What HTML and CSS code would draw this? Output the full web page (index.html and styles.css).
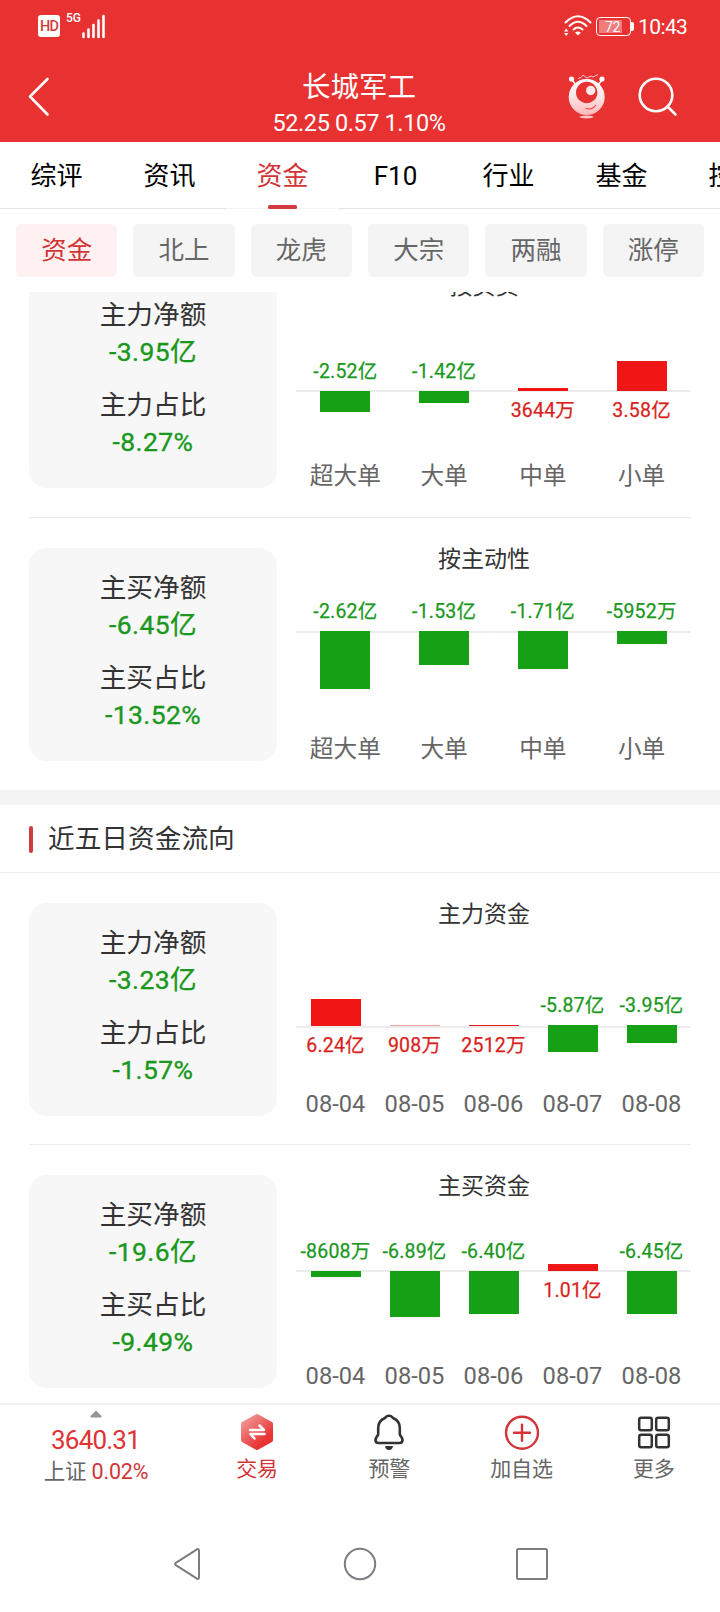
FILE: index.html
```html
<!DOCTYPE html>
<html lang="zh-CN">
<head>
<meta charset="utf-8">
<title>长城军工</title>
<link rel="stylesheet" href="styles.css">
</head>
<body>
<div class="screen">
  <header class="header">
    <div class="status">
      <span class="hd">HD</span>
      <span class="net">5G</span>
      <svg class="signal" width="24" height="25" viewBox="0 0 24 25" stroke="#fff" stroke-width="2.6" stroke-linecap="round"><path d="M1.5 19.5V23M6.5 15.5V23M11.500 11V23M16.500 6.500V23M21.500 2V23"/></svg>
      <span class="grow"></span>
      <svg class="wifi" width="28" height="22" viewBox="0 0 28 22" fill="none" stroke="#fff" stroke-width="2" stroke-linecap="round"><path d="M1.500 7.500Q14-5 26.500 7.500M5.500 11Q14 2.500 22.500 11M9.500 14.500Q14 10.500 18.500 14.500"/><path d="M11 17.500Q14 15.500 17 17.500L14 20.500Z" fill="#fff" stroke="none"/><path d="M0 16.500L2.200 13.500L4.400 16.500ZM0 18L2.200 21L4.400 18Z" fill="#fff" stroke="none"/></svg>
      <span class="battery"><span class="charge">72</span></span><span class="pole"></span>
      <span class="clock">10:43</span>
    </div>
    <div class="titlebar">
      <svg class="back" width="22" height="40" viewBox="0 0 22 40" fill="none" stroke="#fff" stroke-width="2.600" stroke-linecap="round" stroke-linejoin="round"><path d="M19.500 2L2 19.500L19.500 37.500"/></svg>
      <div class="heading">
        <h1 class="name">长城军工</h1>
        <p class="quote">52.25 0.57 1.10%</p>
      </div>
      <svg class="robot" width="38" height="47" viewBox="0 0 38 47" fill="none">
        <defs><linearGradient id="skin" x1="0" y1="0" x2="0" y2="1"><stop offset="0" stop-color="#fff"/><stop offset=".5" stop-color="#ffe4e4"/><stop offset="1" stop-color="#ffb9b9"/></linearGradient></defs>
        <path d="M10 5.500L13 4.500L15 2L19 5L23 3L25 4L30 1.500" stroke="#ffc9c9" stroke-width="1"/>
        <path d="M4 7L8 12M34 7L30 12" stroke="#fff" stroke-width="1.400"/>
        <circle cx="3.500" cy="6" r="2.600" fill="#fff"/><circle cx="34" cy="6" r="2.600" fill="#fff"/>
        <circle cx="18.700" cy="24" r="18" fill="url(#skin)"/>
        <circle cx="18.700" cy="19.500" r="10.700" fill="#e83131"/>
        <circle cx="22.700" cy="17.500" r="4.700" fill="#ffe8e8"/>
        <path d="M18 35.500Q24.500 37 27.500 32.500" stroke="#e94444" stroke-width="1.200" stroke-linecap="round"/>
        <ellipse cx="18.500" cy="44" rx="7" ry="1.500" fill="#ffc4c4"/>
      </svg>
      <svg class="search" width="40" height="40" viewBox="0 0 40 40" fill="none" stroke="#fff" stroke-width="2.600" stroke-linecap="round"><circle cx="18" cy="18" r="16.300"/><path d="M29.500 29.500L37.500 37.500"/></svg>
    </div>
  </header>

  <nav class="tabs">
    <a class="tab">综评</a>
    <a class="tab">资讯</a>
    <a class="tab tab-active">资金</a>
    <a class="tab">F10</a>
    <a class="tab">行业</a>
    <a class="tab">基金</a>
    <a class="tab">控股</a>
  </nav>

  <nav class="chips">
    <a class="chip chip-active">资金</a>
    <a class="chip">北上</a>
    <a class="chip">龙虎</a>
    <a class="chip">大宗</a>
    <a class="chip">两融</a>
    <a class="chip">涨停</a>
  </nav>

  <main class="content">
    <section class="today">
      <article class="row">
        <div class="card">
          <div class="stat"><span>主力净额</span><b>-3.95亿</b></div>
          <div class="stat"><span>主力占比</span><b>-8.27%</b></div>
        </div>
        <div class="chart axis-trade">
          <h3>按买卖</h3>
          <div class="plot">
            <div class="col down"><div class="above"><em>-2.52亿</em></div><div class="below"><i style="height:21px"></i></div></div>
            <div class="col down"><div class="above"><em>-1.42亿</em></div><div class="below"><i style="height:12px"></i></div></div>
            <div class="col up"><div class="above"><i style="height:3px"></i></div><div class="below"><em>3644万</em></div></div>
            <div class="col up"><div class="above"><i style="height:30px"></i></div><div class="below"><em>3.58亿</em></div></div>
          </div>
          <div class="names"><span>超大单</span><span>大单</span><span>中单</span><span>小单</span></div>
        </div>
      </article>
      <article class="row">
        <div class="card">
          <div class="stat"><span>主买净额</span><b>-6.45亿</b></div>
          <div class="stat"><span>主买占比</span><b>-13.52%</b></div>
        </div>
        <div class="chart axis-active">
          <h3>按主动性</h3>
          <div class="plot">
            <div class="col down"><div class="above"><em>-2.62亿</em></div><div class="below"><i style="height:57.500px"></i></div></div>
            <div class="col down"><div class="above"><em>-1.53亿</em></div><div class="below"><i style="height:33.600px"></i></div></div>
            <div class="col down"><div class="above"><em>-1.71亿</em></div><div class="below"><i style="height:37.500px"></i></div></div>
            <div class="col down"><div class="above"><em>-5952万</em></div><div class="below"><i style="height:13px"></i></div></div>
          </div>
          <div class="names"><span>超大单</span><span>大单</span><span>中单</span><span>小单</span></div>
        </div>
      </article>
    </section>

    <section class="recent">
      <h2 class="section-title">近五日资金流向</h2>
      <article class="row">
        <div class="card">
          <div class="stat"><span>主力净额</span><b>-3.23亿</b></div>
          <div class="stat"><span>主力占比</span><b>-1.57%</b></div>
        </div>
        <div class="chart axis-main">
          <h3>主力资金</h3>
          <div class="plot">
            <div class="col up"><div class="above"><i style="height:27.500px"></i></div><div class="below"><em>6.24亿</em></div></div>
            <div class="col up"><div class="above"><i class="faint" style="height:1px"></i></div><div class="below"><em>908万</em></div></div>
            <div class="col up"><div class="above"><i style="height:1.500px"></i></div><div class="below"><em>2512万</em></div></div>
            <div class="col down"><div class="above"><em>-5.87亿</em></div><div class="below"><i style="height:26.500px"></i></div></div>
            <div class="col down"><div class="above"><em>-3.95亿</em></div><div class="below"><i style="height:18px"></i></div></div>
          </div>
          <div class="names"><span>08-04</span><span>08-05</span><span>08-06</span><span>08-07</span><span>08-08</span></div>
        </div>
      </article>
      <article class="row">
        <div class="card">
          <div class="stat"><span>主买净额</span><b>-19.6亿</b></div>
          <div class="stat"><span>主买占比</span><b>-9.49%</b></div>
        </div>
        <div class="chart axis-buy">
          <h3>主买资金</h3>
          <div class="plot">
            <div class="col down"><div class="above"><em>-8608万</em></div><div class="below"><i style="height:6px"></i></div></div>
            <div class="col down"><div class="above"><em>-6.89亿</em></div><div class="below"><i style="height:45.600px"></i></div></div>
            <div class="col down"><div class="above"><em>-6.40亿</em></div><div class="below"><i style="height:42.500px"></i></div></div>
            <div class="col up"><div class="above"><i style="height:7px"></i></div><div class="below"><em>1.01亿</em></div></div>
            <div class="col down"><div class="above"><em>-6.45亿</em></div><div class="below"><i style="height:42.800px"></i></div></div>
          </div>
          <div class="names"><span>08-04</span><span>08-05</span><span>08-06</span><span>08-07</span><span>08-08</span></div>
        </div>
      </article>
    </section>
  </main>

  <footer class="toolbar">
    <div class="index">
      <svg width="12" height="8" viewBox="0 0 12 8"><path d="M6 .5L11.500 6V7.500H.5V6Z" fill="#969696"/></svg>
      <span class="points">3640.31</span>
      <span class="change">上证 <span class="rise">0.02%</span></span>
    </div>
    <a class="tool tool-trade">
      <svg width="36" height="38" viewBox="0 0 36 38">
        <defs><linearGradient id="hex" gradientUnits="userSpaceOnUse" x1="4" y1="3" x2="32" y2="35"><stop offset="0" stop-color="#f3a0a0"/><stop offset=".75" stop-color="#e73535"/><stop offset="1" stop-color="#e92f2f"/></linearGradient></defs>
        <path d="M18 3L32 10.800V27.200L18 35L4 27.200V10.800Z" fill="url(#hex)" stroke="url(#hex)" stroke-width="4" stroke-linejoin="round"/>
        <path d="M11 17H25L20.500 12.500M25.500 21H11.500L15.500 25.500" fill="none" stroke="#fff" stroke-width="2.500" stroke-linecap="round" stroke-linejoin="round"/>
      </svg>
      <span>交易</span>
    </a>
    <a class="tool">
      <svg width="36" height="38" viewBox="0 0 36 38" fill="none" stroke="#333" stroke-width="2.600" stroke-linejoin="round"><path d="M18 2.800C15.500 2.800 14.700 4.200 14 5C9.500 6.800 7.200 10.800 7.200 15V21C7.200 23 4.500 24 4.500 27C4.500 29 5.700 30 7.500 30H28.500C30.300 30 31.500 29 31.500 27C31.500 24 28.800 23 28.800 21V15C28.800 10.800 26.500 6.800 22 5C21.300 4.200 20.500 2.800 18 2.800Z"/><path d="M14 33H22Q21.500 37 18 37T14 33Z" fill="#333" stroke="none"/></svg>
      <span>预警</span>
    </a>
    <a class="tool">
      <svg width="36" height="38" viewBox="0 0 36 38" fill="none" stroke="#d23437" stroke-width="2.400" stroke-linecap="round"><circle cx="18" cy="19.700" r="16"/><path d="M10 19.700H26M18 11.700V27.700"/></svg>
      <span>加自选</span>
    </a>
    <a class="tool">
      <svg width="36" height="38" viewBox="0 0 36 38" fill="none" stroke="#333" stroke-width="2.500"><rect x="3.200" y="4.700" width="12.600" height="12.600" rx="2"/><rect x="20.200" y="4.700" width="12.600" height="12.600" rx="2"/><rect x="3.200" y="21.700" width="12.600" height="12.600" rx="2"/><rect x="20.200" y="21.700" width="12.600" height="12.600" rx="2"/></svg>
      <span>更多</span>
    </a>
  </footer>

  <div class="keys">
    <svg width="34" height="34" viewBox="0 0 34 34" fill="none" stroke="#7b7d82" stroke-width="2" stroke-linejoin="round"><path d="M4.800 15.800L26 2.300Q28 1.500 28 4V30Q28 32.500 26 31.700L4.800 18.200Q3.200 17 4.800 15.800Z"/></svg>
    <svg width="34" height="34" viewBox="0 0 34 34" fill="none" stroke="#7b7d82" stroke-width="2"><circle cx="17" cy="17" r="15.200"/></svg>
    <svg width="34" height="34" viewBox="0 0 34 34" fill="none" stroke="#7b7d82" stroke-width="2"><rect x="2" y="2" width="30" height="30" rx="1.500"/></svg>
  </div>
</div>
</body>
</html>
```
FILE: styles.css
```css
* { box-sizing: border-box; margin: 0; padding: 0; }
body {
  background: #fff;
  color: #333;
  font-family: Roboto, "Noto Sans CJK SC", sans-serif;
}
h1, h2, h3, b, em, i { font-weight: 400; font-style: normal; }
svg { display: block; flex: none; }
.screen { width: 720px; height: 1612px; overflow: hidden; display: flex; flex-direction: column; }

/* Header */
.header { height: 142px; flex: none; background: #e83131; color: #fff; }
.status { display: flex; height: 52px; padding: 0 31px 0 38px; }
.hd { width: 22px; height: 22px; margin-top: 15px; border-radius: 3px; background: #fff; color: #d8393b; font-size: 14.5px; font-weight: 500; line-height: 23px; text-align: center; letter-spacing: -.8px; }
.net { margin: 11px 0 0 6px; width: 15px; font-size: 12px; font-weight: 500; line-height: 15px; }
.signal { margin: 14px 0 0 1px; }
.grow { flex: 1; }
.wifi { margin-top: 15px; }
.battery { width: 35px; height: 19px; margin: 17px 0 0 4px; padding: 2px; border: 1.5px solid #fff; border-radius: 4px; }
.charge { display: block; width: 23px; height: 13px; padding-left: 6px; background: #f27b7b; font-size: 14px; line-height: 14px; white-space: nowrap; letter-spacing: -.3px; }
.pole { width: 3px; height: 9px; margin-top: 22px; background: #fff; border-radius: 0 2px 2px 0; }
.clock { width: 51px; margin: 15px 0 0 4px; font-size: 21px; line-height: 24px; letter-spacing: -.6px; white-space: nowrap; }
.titlebar { display: flex; height: 90px; padding: 0 42px 0 28px; }
.back { margin-top: 25px; }
.heading { flex: 1; padding: 18px 0 0 101px; width: 0; text-align: center; }
.name { font-size: 28.5px; line-height: 36px; white-space: nowrap; }
.quote { margin-top: 3px; font-size: 23.5px; line-height: 28px; letter-spacing: -.4px; white-space: nowrap; }
.robot { margin: 21px 0 0 1px; }
.search { margin: 25px 0 0 32px; }

/* Tabs */
.tabs { display: flex; height: 67px; flex: none; border-bottom: 1px solid #e4e4e4; }
.tab { width: 113px; flex: none; height: 67px; color: #000; font-size: 26px; line-height: 68px; text-align: center; }
.tab-active { display: flex; flex-direction: column; align-items: center; justify-content: space-between; color: #d23437; background: #fff; border-bottom: 1px solid #f4f4f4; }
.tab-active::after { content: ""; width: 29px; height: 4px; margin-top: -5px; border-radius: 1.5px; background: #d23b3e; flex: none; }

/* Sub tabs */
.chips { display: grid; grid-template-columns: repeat(6, 1fr); gap: 16px; height: 83px; flex: none; padding: 15px 16px; }
.chip { height: 53px; border-radius: 6px; background: #f4f4f4; color: #666; font-size: 25.5px; line-height: 53px; text-align: center; }
.chip-active { background: #fff1f1; color: #d23437; }

/* Scrolled content */
.content { height: 1111px; flex: none; overflow: hidden; display: flex; flex-direction: column; }
.today { margin-top: -47px; flex: none; border-bottom: 15px solid #f4f4f4; }
.recent { flex: none; }
.section-title { display: flex; align-items: center; gap: 15px; height: 68px; padding-left: 29px; border-bottom: 1px solid #ececec; font-size: 26.7px; line-height: 67px; padding-top: 1px; }
.section-title::before { content: ""; width: 4px; height: 27px; border-radius: 2px; background: #d23b3e; }
.row { display: flex; gap: 19px; height: 272px; margin: 0 29px; padding-top: 30px; }
.recent .row { height: 271px; }
.row + .row { height: 273px; border-top: 1px solid #ececec; }
.card { width: 248px; height: 213px; flex: none; padding-top: 22px; border-radius: 18px; background: #f7f7f7; display: flex; flex-direction: column; gap: 17px; text-align: center; }
.stat { display: flex; flex-direction: column; font-size: 26.7px; line-height: 36.5px; }
.stat b { color: #1a981d; font-size: 26.5px; letter-spacing: .4px; -webkit-text-stroke: .35px #1a981d; }

/* Bar charts */
.chart { width: 395px; height: 213px; display: flex; flex-direction: column; }
.chart h3 { height: 24px; padding-right: 19px; font-size: 23px; line-height: 24px; text-align: center; }
.plot { display: flex; height: 163px; }
.col { flex: 1; width: 0; display: flex; flex-direction: column; font-size: 19.500px; line-height: 24px; letter-spacing: .2px; white-space: nowrap; }
.col em { -webkit-text-stroke: .25px currentColor; }
.col i { width: 50px; position: relative; }
.above, .below { display: flex; flex-direction: column; align-items: center; }
.above { height: 91px; justify-content: flex-end; flex: none; }
.above em { margin-bottom: 7px; }
.below { flex: 1; background: linear-gradient(#ececec, #ececec) top / 100% 2px no-repeat; }
.below em { margin-top: 8px; }
.axis-active .above { height: 59px; }
.axis-main .above { height: 99px; }
.axis-main .below i { margin-top: -1px; }
.axis-main .above em { margin-bottom: 8px; }
.axis-buy .above { height: 71px; }
.axis-trade .above em, .axis-buy .above em { margin-bottom: 6px; }
.axis-trade .above i, .axis-buy .above i { margin-bottom: -1px; }
.axis-trade .below i, .axis-buy .below i { margin-top: 1px; }
.axis-trade .below em, .axis-buy .below em { margin-top: 9px; }
.up { color: #d91f20; }
.up i { background: #f01616; }
.up .faint { background: #f0a0a0; }
.down { color: #1a981d; }
.down i { background: #16a016; }
.names { display: flex; height: 26px; color: #666; font-size: 23.700px; line-height: 28px; text-align: center; }
.names span { flex: 1; width: 0; white-space: nowrap; }

/* Bottom toolbar */
.toolbar { display: flex; height: 104px; flex: none; border-top: 2px solid #f2f2f2; }
.index { width: 191px; padding-top: 5px; display: flex; flex-direction: column; align-items: center; }
.points { margin-top: 7px; color: #e03336; font-size: 26px; line-height: 30px; letter-spacing: -.8px; }
.change { margin: 3px 0 0 1px; font-size: 21.500px; line-height: 28px; color: #666; letter-spacing: -.2px; white-space: nowrap; }
.rise { color: #d23437; }
.tool { flex: 1; padding-top: 8px; display: flex; flex-direction: column; align-items: center; color: #666; font-size: 21px; line-height: 28px; }
.tool span { margin-top: 4px; }
.tool-trade { color: #d23437; }

/* System keys */
.keys { display: flex; justify-content: center; gap: 138px; padding-top: 40px; }
```
